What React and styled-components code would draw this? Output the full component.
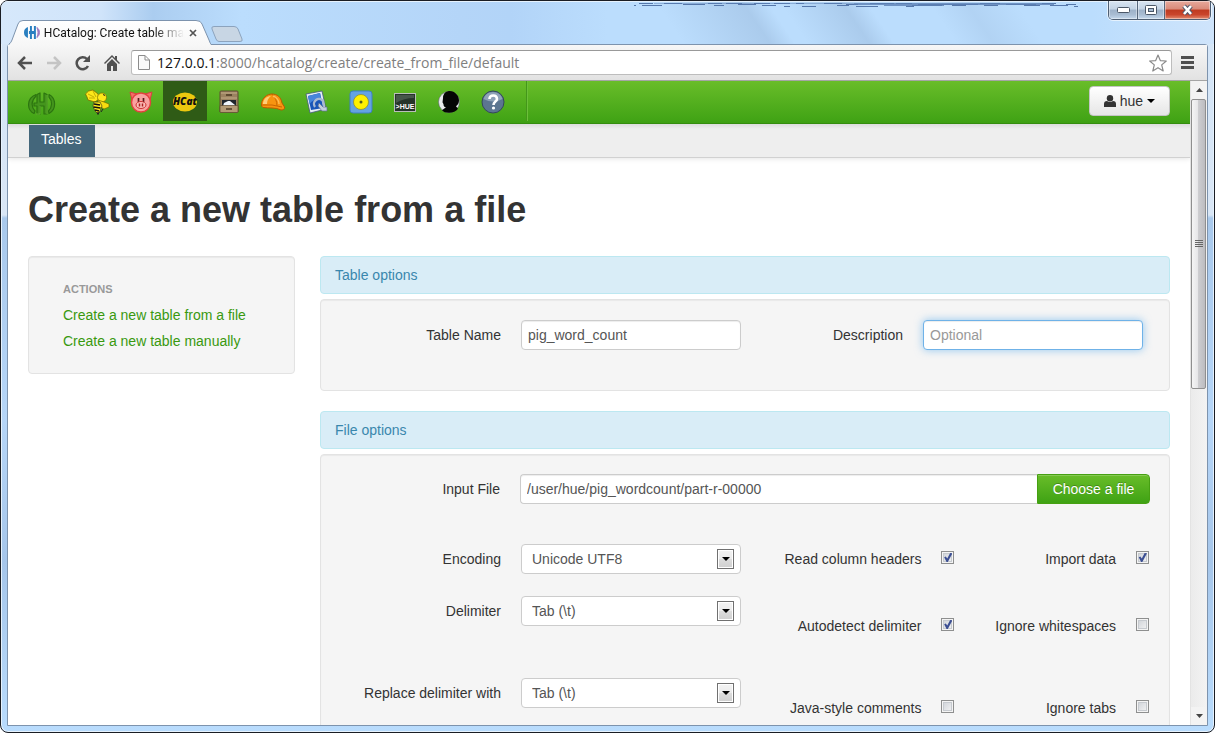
import React from "react";
import styled, { createGlobalStyle } from "styled-components";

const Global = createGlobalStyle`
  *, *::before, *::after { box-sizing: border-box; }
  html, body, #root { height: 100%; }
  body {
    margin: 0;
    background: #fff;
    overflow: hidden;
    font-family: "Liberation Sans", Arial, sans-serif;
    font-size: 14px;
    line-height: 20px;
    color: #333;
  }
  button, input, select { font: inherit; }
  svg { display: block; }
`;

/* ---------- window frame ---------- */

const Window = styled.div`
  height: 100vh;
  min-width: 960px;
  display: flex;
  flex-direction: column;
  position: relative;
  border: 1px solid #1a1d24;
  border-radius: 8px;
  padding: 0 6px 6px;
  overflow: hidden;
  box-shadow: inset 0 0 0 1px #e6f2fd;
  background: linear-gradient(180deg, #d3e5f8 0, #d9e6f5 214px, #a9c9ec 217px, #b6d6f8 420px, #a6c6ea 560px, #b9dcfd 100%);
`;

const TitleBar = styled.header`
  height: 43px;
  flex: none;
  display: flex;
  align-items: flex-end;
  margin: 0 -6px;
  padding-left: 8px;
  border-top: 1px solid #e6f2fd;
  background:
    linear-gradient(56deg, transparent 55%, rgba(140, 170, 205, 0.35) 62%, transparent 64% 65%, rgba(140, 170, 205, 0.35) 70%, transparent 72% 77%, rgba(140, 170, 205, 0.2) 80%, transparent 84%),
    linear-gradient(90deg, #d6e8fb 0, #d0e4fa 100px, #abcdf0 152px, #bbddfd 240px, #b4d5f8 38%, #b2d4f8 42%, #bbddfd 50%, #bbddfd 90%, #cfe4fb 100%);
`;

const Artifact = styled.svg`
  position: absolute;
  top: 0;
  right: 130px;
`;

const Controls = styled.div`
  position: absolute;
  top: 0;
  right: 3px;
  display: flex;
  height: 19px;
  border: 1px solid #4f5f73;
  border-top: 0;
  border-radius: 0 0 5px 5px;
  overflow: hidden;
  box-shadow: 0 0 0 1px rgba(255, 255, 255, 0.6);
`;

const ControlButton = styled.button`
  width: ${(p) => p.$width}px;
  padding: 0;
  border: 0;
  border-left: ${(p) => (p.$first ? "0" : "1px solid #56677c")};
  display: flex;
  align-items: center;
  justify-content: center;
  background: ${(p) =>
    p.$close
      ? "linear-gradient(#e7a99c 0, #d98a79 45%, #bf3a20 50%, #c9452b 75%, #e28a6e 100%)"
      : "linear-gradient(#d8e5f2 0, #c3d3e4 45%, #9db2c9 50%, #a8bcd2 75%, #c4d8ec 100%)"};
  box-shadow: inset 0 0 0 1px rgba(255, 255, 255, 0.4);
`;

const Tab = styled.div`
  position: relative;
  z-index: 1;
  width: 202px;
  height: 25px;
  margin-bottom: -1px;
  flex: none;
`;

const TabShape = styled.svg`
  position: absolute;
  inset: 0;
`;

const TabContent = styled.div`
  position: relative;
  display: flex;
  align-items: center;
  height: 25px;
  padding: 0 9px 0 15px;
`;

const TabTitle = styled.span`
  flex: 1;
  margin-left: 4px;
  white-space: nowrap;
  font: 12px/16px Roboto, "Open Sans", sans-serif;
  color: #111;
  mask-image: linear-gradient(90deg, #000 110px, transparent 140px);
`;

const BareButton = styled.button`
  display: flex;
  align-items: center;
  justify-content: center;
  width: ${(p) => p.$width}px;
  height: 24px;
  padding: 0;
  border: 0;
  background: none;
  flex: none;
`;

const NewTab = styled(BareButton)`
  height: 20px;
`;

const Inner = styled.div`
  flex: 1;
  min-height: 0;
  display: flex;
  flex-direction: column;
  border: 1px solid #7d93ad;
  border-radius: 3px 3px 0 0;
  background: #fff;
`;

const Toolbar = styled.div`
  height: 36px;
  flex: none;
  display: flex;
  align-items: center;
  padding: 0 4px 0 2px;
  border-bottom: 1px solid #a5a5a5;
  background: linear-gradient(#f7f7f7, #e2e2e2);
`;

const AddressBar = styled.div`
  flex: 1;
  display: flex;
  align-items: center;
  height: 25px;
  margin-left: 5px;
  padding: 0 4px 0 6px;
  border: 1px solid #bdbdbd;
  border-top-color: #999;
  border-radius: 3px;
  background: #fff;
`;

const Url = styled.div`
  flex: 1;
  margin-left: 7px;
  font: 14px/20px "Open Sans", "Noto Sans", sans-serif;
  color: #808080;
  white-space: nowrap;
`;

const Host = styled.span`
  color: #111;
`;

/* ---------- page ---------- */

const Viewport = styled.div`
  flex: 1;
  min-height: 0;
  display: flex;
`;

const Page = styled.div`
  flex: 1;
  min-width: 0;
  overflow: hidden;
  background: #fff;
`;

const NavBar = styled.nav`
  display: flex;
  height: 43px;
  padding: 0 20px;
  border-bottom: 1px solid #36910f;
  background: linear-gradient(#69bd29, #3fa214);
`;

const Logo = styled.a`
  width: 47px;
  padding-top: 11px;
`;

const NavItem = styled.a`
  display: flex;
  align-items: center;
  justify-content: center;
  width: 44px;
  height: 40px;
  padding-top: 2px;
  background: ${(p) => (p.$active ? "#2f5b16" : "transparent")};
`;

const NavDivider = styled.div`
  height: 40px;
  margin-left: 11px;
  border-left: 1px solid #44961a;
  border-right: 1px solid #6cc03a;
`;

const UserButton = styled.button`
  display: flex;
  align-items: center;
  gap: 4px;
  height: 30px;
  margin: 5px 0 0 auto;
  padding: 0 14px;
  border: 1px solid #c4c4c4;
  border-radius: 4px;
  background: linear-gradient(#fff, #e6e6e6);
  color: #333;
`;

const SubNav = styled.div`
  height: 34px;
  padding-left: 21px;
  border-bottom: 1px solid #d1d1d1;
  background: linear-gradient(#dcdcdc 0, #eee 5px);
  box-shadow: 0 1px 5px rgba(0, 0, 0, 0.1);
`;

const SubNavTab = styled.a`
  display: inline-block;
  height: 32px;
  margin-top: 1px;
  padding: 4px 14px 4px 12px;
  background: #44677b;
  color: #fff;
  text-decoration: none;
`;

const Body = styled.main`
  padding: 0 20px;
`;

const Heading = styled.h1`
  margin: 32px 0 26px;
  font-size: 36px;
  line-height: 40px;
  font-weight: bold;
`;

const Columns = styled.div`
  display: grid;
  grid-template-columns: 267fr 850fr;
  gap: 25px;
  align-items: start;
`;

const Well = styled.section`
  min-height: ${(p) => p.$min || 0}px;
  padding: ${(p) => p.$pad || "19px"};
  border: 1px solid #e3e3e3;
  border-radius: 4px;
  background: #f5f5f5;
  box-shadow: inset 0 1px 1px rgba(0, 0, 0, 0.05);
`;

const SideTitle = styled.h2`
  margin: 0 0 3px;
  font-size: 11px;
  line-height: 20px;
  color: #999;
  text-transform: uppercase;
`;

const SideLink = styled.a`
  display: block;
  padding: 3px 0;
  color: #39990f;
  text-decoration: none;
`;

const SectionTitle = styled.h2`
  margin: ${(p) => (p.$spaced ? "20px" : "0")} 0 5px;
  padding: 8px 14px;
  border: 1px solid #bce8f1;
  border-radius: 4px;
  background: #d9edf7;
  color: #3a87ad;
  font-size: 14px;
  font-weight: normal;
  line-height: 20px;
`;

const Pair = styled.div`
  display: grid;
  grid-template-columns: 402fr 408fr;
`;

const Field = styled.div`
  display: flex;
  align-items: center;
  height: 30px;
`;

const FieldLabel = styled.label`
  width: ${(p) => (p.$flush ? "160px" : "161px")};
  margin-right: 20px;
  flex: none;
  text-align: right;
`;

const TextInput = styled.input`
  width: ${(p) => (p.$grow ? "auto" : "220px")};
  flex: ${(p) => (p.$grow ? "1" : "none")};
  min-width: 0;
  height: 30px;
  padding: 4px 6px;
  border: 1px solid ${(p) => (p.$focus ? "#6fb2e8" : "#ccc")};
  border-right-width: ${(p) => (p.$grow ? "0" : "1px")};
  border-radius: ${(p) => (p.$grow ? "4px 0 0 4px" : "4px")};
  outline: 0;
  background: #fff;
  color: #555;
  box-shadow: inset 0 1px 1px rgba(0, 0, 0, 0.075)
    ${(p) => (p.$focus ? ", 0 0 8px rgba(82, 168, 236, 0.6)" : "")};
  &::placeholder { color: #999; }
`;

const ChooseButton = styled.button`
  height: 30px;
  min-width: 113px;
  padding: 0 14px;
  border: 1px solid #46a012;
  border-radius: 0 4px 4px 0;
  background: linear-gradient(#69bd29, #3fa214);
  color: #fff;
  text-shadow: 0 -1px 0 rgba(0, 0, 0, 0.25);
  box-shadow: inset 0 1px 0 rgba(255, 255, 255, 0.2);
`;

const Options = styled.div`
  display: grid;
  grid-template-columns: 400fr 214fr 195fr;
  grid-template-rows: 52px 82px 82px;
  margin-top: 40px;
  padding-right: 1px;
`;

const SelectBox = styled.div`
  position: relative;
  width: 220px;
  flex: none;
`;

const Select = styled.select`
  display: block;
  width: 100%;
  height: 30px;
  padding: 0 30px 0 10px;
  border: 1px solid #ccc;
  border-radius: 4px;
  appearance: none;
  background: #fff;
  color: #555;
`;

const SelectArrow = styled.span`
  position: absolute;
  top: 5px;
  right: 7px;
  display: flex;
  align-items: center;
  justify-content: center;
  width: 17px;
  height: 20px;
  border: 1px solid #707070;
  background: linear-gradient(#f3f3f3, #ebebeb 50%, #ddd 51%, #cfcfcf);
  box-shadow: inset 0 0 0 1px #fff;
  pointer-events: none;
`;

const CheckLabel = styled.label`
  display: flex;
  justify-content: flex-end;
  align-items: center;
  gap: 20px;
  height: 30px;
  margin-top: ${(p) => (p.$low ? "15px" : "0")};
`;

const CheckBox = styled.input`
  appearance: none;
  position: relative;
  width: 13px;
  height: 13px;
  margin: 0 0 3px;
  border: 1px solid #8e8f8f;
  background: linear-gradient(135deg, #cbcfd5, #f6f6f6);
  box-shadow: inset 0 0 0 1px #f4f4f4, inset 0 0 0 2px #c6cacf;
  &:checked::after {
    content: "";
    position: absolute;
    inset: 1px;
    background: #3c4f93;
    clip-path: polygon(8% 48%, 26% 40%, 42% 62%, 74% 0, 100% 4%, 48% 100%, 34% 100%);
  }
`;

/* ---------- scroll bar ---------- */

const ScrollBar = styled.div`
  width: 17px;
  flex: none;
  display: flex;
  flex-direction: column;
  align-items: flex-start;
  border-left: 1px solid #e3e3e3;
  background: linear-gradient(90deg, #ebebeb, #f3f3f3);
`;

const ScrollArrow = styled.button`
  display: flex;
  align-items: center;
  justify-content: center;
  width: 16px;
  height: 18px;
  padding: 0;
  border: 0;
  background: #f3f3f3;
`;

const Thumb = styled.div`
  flex: 0 0 45%;
  width: 15px;
  display: flex;
  align-items: center;
  justify-content: center;
  border: 1px solid #8f8f8f;
  border-radius: 2px;
  background: linear-gradient(90deg, #f5f5f5 0, #e6e6e8 45%, #cdcdd0 50%, #bcbcc0 100%);
`;

const Spacer = styled.div`
  flex: 1;
`;

/* ---------- drawings ---------- */

const Caret = ({ w = 8 }) => (
  <svg width={w} height={w / 2} viewBox="0 0 8 4"><path d="M0 0h8L4 4z" fill="#000" /></svg>
);

const Favicon = () => (
  <svg width="16" height="13" viewBox="0 0 16 13">
    <path d="M4 1v11C1 11 0 9 0 6.500S1 2 4 1z" fill="#2a7fc0" />
    <path d="M5 5h1V0h2v5h2V0h2v13h-2V8H8v5H6V8H5z" fill="#2a7fc0" />
    <path d="M13 1.500c3.500 2 3.500 8 0 10 1.500-3.500 1.500-6.500 0-10z" fill="#a07cc0" stroke="#a07cc0" />
  </svg>
);

const HueLogo = () => (
  <svg width="28" height="24" viewBox="0 0 28 24">
    <g fill="#44951d" stroke="#2c7410" strokeWidth="1.200" strokeLinejoin="round">
      <path d="M8 2.500C-1.500 6-1.500 18 6 21.500L7 19C3 15 3 9 8 4z" />
      <path d="M21 2.500c7.500 4 7.500 15 0 19l-.5-2.500c4-4 4-10 .500-14z" />
      <path d="M9 2.500 12 1v9h4V1l3 1.500V22h-3v-8h-4v8H9v-8H6v-3h3z" />
    </g>
    <path d="M12 14v8M8 22h4M19 3v19" stroke="#6fbf3a" strokeWidth=".8" fill="none" />
  </svg>
);

const Bee = () => (
  <svg width="26" height="26" viewBox="0 0 26 26">
    <path d="M1.500 5Q4 1 9 1l5 4 1 5-4 3-7-2-1-3z" fill="#ffe81a" stroke="#7a6a00" strokeWidth=".8" />
    <path d="m4 5 6 3M9 2l3 6M5 9l6 0" stroke="#b39e00" fill="none" strokeWidth=".8" />
    <circle cx="18" cy="8.500" r="4.500" fill="#ffe81a" stroke="#7a6a00" strokeWidth=".7" />
    <path d="m14 11 6 2 5 2v3l-5 2-6-4z" fill="#f6dc10" stroke="#6a5c00" strokeWidth=".6" />
    <path d="M10 13h6l2 4-2 5-2 3-3-3-2-5z" fill="#ffe81a" stroke="#222" strokeWidth=".6" />
    <path d="m10 15 6 1M9.500 18l7 1M11 21l4 1" stroke="#111" strokeWidth="1.700" />
    <path d="m13 23 1 2.500 1-2.500M19 5.500l2 1M19 20l-2 3" stroke="#222" fill="none" />
  </svg>
);

const Pig = () => (
  <svg width="24" height="24" viewBox="0 0 24 24">
    <path d="m1 2 7 2-5 6zM23 2l-7 2 5 6z" fill="#f56d6a" stroke="#d83f3f" />
    <circle cx="12" cy="12.500" r="9.500" fill="#f9a2a0" stroke="#e2423f" strokeWidth="1.500" />
    <path d="M9.500 8v4M14.500 8v4" stroke="#5a1a1a" strokeWidth="1.700" />
    <ellipse cx="12" cy="15" rx="5" ry="3.500" fill="#fcbcb8" stroke="#c33" />
    <path d="M10.500 13.500v3M13.500 13.500v3" stroke="#a22" strokeWidth="1.500" />
  </svg>
);

const HCat = () => (
  <svg width="28" height="22" viewBox="0 0 28 22">
    <ellipse cx="14" cy="11" rx="12" ry="9.500" fill="#ecc80f" />
    <text x="14" y="14" textAnchor="middle" fontFamily="Open Sans, sans-serif" fontSize="10" fontWeight="800" fontStyle="italic" fill="#111">HCat</text>
  </svg>
);

const Cabinet = () => (
  <svg width="22" height="24" viewBox="0 0 22 24">
    <path d="M2 2q0-1 1-1h16q1 0 1 1v20H2z" fill="#9b8260" stroke="#5f4c32" />
    <path d="M3 3h16M3 8h16" stroke="#c3ad87" />
    <rect x="4" y="10" width="14" height="6" fill="#20262c" />
    <path d="m5 16 1-3 4-2 2 0 5 4v1z" fill="#eef4fa" />
    <rect x="2" y="15.500" width="18" height="7" rx="1" fill="#b39a75" stroke="#5c482e" strokeWidth=".7" />
    <path d="M8 5h6M8 19h6" stroke="#4a3820" strokeWidth="1.500" />
  </svg>
);

const Helmet = () => (
  <svg width="26" height="20" viewBox="0 0 26 20">
    <path d="M1.500 12C2 6 7 2 12 2c5 0 9 3 10 9l2.500 4q.5 3-3.500 3-4-2-9-2-4 0-9-.500-2-1-1.500-3.500z" fill="#f79410" stroke="#b95a00" />
    <path d="M3 12c0-4 3-8 8-8-3 2-4 5-4 8z" fill="#ffcf78" />
    <path d="M12 2c3 3 5 7 5 12M2 13q10-1 20 2" stroke="#c96500" fill="none" />
    <path d="M13 4c3 1 6 4 6 8" stroke="#ffbd58" strokeWidth="1.500" fill="none" />
  </svg>
);

const Designer = () => (
  <svg width="24" height="24" viewBox="0 0 24 24">
    <path d="m1 4 16-3 4 18-16 4z" fill="#e6edf5" stroke="#43597a" strokeWidth=".8" />
    <path d="m3 6 12-3 3.500 15L6 20z" fill="#1955b8" />
    <path d="m3 6 12-3 1 5Q8 9 4.500 14z" fill="#4685dc" />
    <path d="M10 17a5 5 0 1 1 8-6l1 5" fill="none" stroke="#a9b9d2" strokeWidth="2.400" />
    <path d="m14 13 4 4h4v4h-5l-4-5z" fill="#c3cedd" stroke="#5e7397" strokeWidth=".7" />
  </svg>
);

const Disc = () => (
  <svg width="24" height="24" viewBox="0 0 24 24">
    <rect x="1" y="1" width="22" height="22" rx="3" fill="#64a3e2" stroke="#3f7fc4" />
    <circle cx="12" cy="12" r="7.500" fill="#fff100" stroke="#8b8a25" strokeWidth=".7" />
    <circle cx="12" cy="12" r="1.500" fill="#555d20" />
  </svg>
);

const Shell = () => (
  <svg width="22" height="19" viewBox="0 0 22 19">
    <rect x=".5" y=".5" width="21" height="18" fill="#26342a" stroke="#b9beb9" />
    <path d="M2 2h18v3Q10 5 2 10z" fill="#46564a" />
    <text x="11" y="16" textAnchor="middle" fontFamily="Liberation Sans, sans-serif" fontSize="7" fontWeight="bold" fill="#fff">&gt;HUE</text>
  </svg>
);

const Profile = () => (
  <svg width="24" height="24" viewBox="0 0 24 24">
    <circle cx="12" cy="12" r="10.500" fill="#e9ebec" stroke="#667" strokeWidth=".6" />
    <path d="M11 1.200c6-1.200 11 4 11 9 0 3-1 4-3 6l2 2.500q-3 4-9 4-5 0-7-2.500l4-3q-2.500 0-2.500-3l-1-2 .500-4q0-6 5-7z" fill="#050505" />
  </svg>
);

const Help = () => (
  <svg width="24" height="24" viewBox="0 0 24 24">
    <circle cx="12" cy="12" r="11" fill="#5c7590" stroke="#34485c" />
    <path d="M2.500 9a10 10 0 0 1 19 0q-9 5-19 0z" fill="#8ea2b7" />
    <path d="M8.500 9q0-3.500 3.700-3.500T16 9q0 1.500-1.800 2.700Q12.500 13 12.500 15" fill="none" stroke="#fff" strokeWidth="2.600" />
    <circle cx="12.500" cy="18" r="1.600" fill="#fff" />
  </svg>
);

const apps = [
  ["Beeswax", Bee], ["Pig", Pig], ["HCatalog", HCat], ["File Browser", Cabinet],
  ["Job Browser", Helmet], ["Job Designer", Designer], ["Oozie", Disc],
  ["Shell", Shell], ["User Admin", Profile], ["Help", Help],
];

const dashes = [
  [0, 4, 2], [5, 2, 14], [8, 4, 20], [30, 2, 18], [49, 3, 22], [74, 2, 14], [80, 4, 10], [92, 2, 16],
  [104, 3, 18], [120, 2, 16], [128, 4, 14], [140, 2, 16], [150, 5, 6], [162, 2, 8], [168, 5, 14],
  [190, 2, 18], [203, 4, 12], [212, 3, 12], [222, 5, 22], [236, 2, 24], [272, 5, 8], [262, 2, 16],
  [284, 3, 60], [278, 4, 30], [318, 4, 14], [346, 2, 20], [350, 4, 14], [372, 3, 30], [390, 4, 16],
  [408, 2, 14], [416, 4, 18], [432, 3, 10], [440, 5, 4],
];

function Choice({ name, label, value }) {
  return (
    <Field>
      <FieldLabel htmlFor={name}>{label}</FieldLabel>
      <SelectBox>
        <Select id={name} defaultValue={value}><option>{value}</option></Select>
        <SelectArrow><Caret /></SelectArrow>
      </SelectBox>
    </Field>
  );
}

function Check({ label, on, low }) {
  return (
    <CheckLabel $low={low}>
      {label}
      <CheckBox type="checkbox" defaultChecked={on} />
    </CheckLabel>
  );
}

function Chrome() {
  return (
    <>
      <TitleBar>
        <Tab>
          <TabShape width="202" height="25" viewBox="0 0 202 25">
            <defs>
              <linearGradient id="tabfill" x1="0" y1="0" x2="0" y2="1">
                <stop offset="0" stopColor="#fff" /><stop offset="1" stopColor="#f7f7f7" />
              </linearGradient>
            </defs>
            <path d="M0 25Q2 23 3 20L9 4Q10 .500 14 .500H187Q192 .500 193 4L200 20Q201 24 202 25z" fill="url(#tabfill)" />
            <path d="M0 24Q2 23 3 20L9 4Q10 .500 14 .500H187Q192 .500 193 4L200 20Q201 23 202 24" fill="none" stroke="#7d93ad" />
          </TabShape>
          <TabContent>
            <Favicon />
            <TabTitle>HCatalog: Create table ma</TabTitle>
            <BareButton $width={18} aria-label="Close tab">
              <svg width="8" height="8" viewBox="0 0 8 8"><path d="m1 1 6 6M7 1 1 7" stroke="#555" strokeWidth="1.700" /></svg>
            </BareButton>
          </TabContent>
        </Tab>
        <NewTab $width={32} aria-label="New tab">
          <svg width="32" height="16" viewBox="0 0 32 16">
            <path d="M3 .500H23Q26 .500 27 3L31 13Q32 15.500 29 15.500H8Q6 15.500 5 13L1 3Q0 .500 3 .500z" fill="#c8d6e4" stroke="#8ca3bd" />
          </svg>
        </NewTab>
      </TitleBar>
      <Artifact width="450" height="6" viewBox="0 0 450 6">
        {dashes.map(([x, y, w]) => <rect key={x} x={x} y={y} width={w} height="1" fill="#5577aa" />)}
        <rect x="20" y="2" width="200" height="1" fill="#5b80b4" opacity=".5" />
        <rect x="220" y="2" width="200" height="2" fill="#5b80b4" opacity=".8" />
        <rect x="250" y="4" width="60" height="1" fill="#5b80b4" opacity=".8" />
      </Artifact>
      <Controls>
        <ControlButton $width={28} $first aria-label="Minimize">
          <svg width="13" height="6" viewBox="0 0 13 6"><rect x=".5" y=".5" width="12" height="5" rx="1" fill="#fff" stroke="#4b5868" /></svg>
        </ControlButton>
        <ControlButton $width={27} aria-label="Maximize">
          <svg width="12" height="10" viewBox="0 0 12 10">
            <rect x=".5" y=".5" width="11" height="9" rx="1" fill="#fff" stroke="#4b5868" />
            <rect x="3.500" y="3.500" width="5" height="3" fill="#a9bdd3" stroke="#4b5868" />
          </svg>
        </ControlButton>
        <ControlButton $width={46} $close aria-label="Close">
          <svg width="13" height="12" viewBox="0 0 13 12">
            <path d="m3 2 7 8M10 2 3 10" stroke="#51576a" strokeWidth="4.500" />
            <path d="m3 2 7 8M10 2 3 10" stroke="#fff" strokeWidth="2.600" />
          </svg>
        </ControlButton>
      </Controls>
    </>
  );
}

function BrowserBar() {
  return (
    <Toolbar>
      <BareButton $width={29} aria-label="Back">
        <svg width="16" height="14" viewBox="0 0 16 14" fill="none" stroke="#505050" strokeWidth="2.500"><path d="M8 1 2 7l6 6M2 7h13" /></svg>
      </BareButton>
      <BareButton $width={29} aria-label="Forward">
        <svg width="16" height="14" viewBox="0 0 16 14" fill="none" stroke="#c4c4c4" strokeWidth="2.500"><path d="m8 1 6 6-6 6M14 7H1" /></svg>
      </BareButton>
      <BareButton $width={29} aria-label="Reload">
        <svg width="16" height="16" viewBox="0 0 16 16"><path d="M13 11a6 6 0 1 1-1-7" fill="none" stroke="#505050" strokeWidth="2.500" /><path d="M15 0v7H8z" fill="#505050" /></svg>
      </BareButton>
      <BareButton $width={29} aria-label="Home">
        <svg width="16" height="16" viewBox="0 0 16 16" fill="#505050"><path d="M8 0 0 8l1 1 7-7 7 7 1-1-3-3V1h-2v2zM3 9l5-5 5 5v7H9v-5H7v5H3z" /></svg>
      </BareButton>
      <AddressBar>
        <svg width="12" height="15" viewBox="0 0 12 15" fill="#fafafa" stroke="#8c8c8c"><path d="M.5.5H7L11.500 5v9.500H.5zM7 .5V5h4.500" /></svg>
        <Url><Host>127.0.0.1</Host>:8000/hcatalog/create/create_from_file/default</Url>
        <svg width="18" height="18" viewBox="0 0 18 18" fill="#fff" stroke="#8a8a8a" strokeWidth="1.200" strokeLinejoin="round">
          <path d="m9 1 2.300 5.600 6 .4-4.600 3.900L14.200 17 9 13.700 3.800 17l1.500-6.100L.7 7l6-.4z" />
        </svg>
      </AddressBar>
      <BareButton $width={31} aria-label="Menu">
        <svg width="13" height="13" viewBox="0 0 13 13"><path d="M0 1.500h13M0 6.500h13M0 11.500h13" stroke="#505050" strokeWidth="3" /></svg>
      </BareButton>
    </Toolbar>
  );
}

export default function App() {
  return (
    <>
      <Global />
      <Window>
        <Chrome />
        <Inner>
          <BrowserBar />
          <Viewport>
            <Page>
              <NavBar>
                <Logo href="#" aria-label="Hue"><HueLogo /></Logo>
                {apps.map(([name, Icon]) => (
                  <NavItem key={name} href="#" aria-label={name} $active={name === "HCatalog"}><Icon /></NavItem>
                ))}
                <NavDivider />
                <UserButton>
                  <svg width="12" height="12" viewBox="0 0 12 12" fill="#333"><circle cx="6" cy="3.200" r="3.200" /><path d="M0 12V9q0-3 3-3 3 2 6 0 3 0 3 3v3z" /></svg>
                  hue
                  <Caret />
                </UserButton>
              </NavBar>
              <SubNav><SubNavTab href="#">Tables</SubNavTab></SubNav>
              <Body>
                <Heading>Create a new table from a file</Heading>
                <Columns>
                  <Well as="aside" $min={118} $pad="22px 34px 17px">
                    <SideTitle>Actions</SideTitle>
                    <SideLink href="#">Create a new table from a file</SideLink>
                    <SideLink href="#">Create a new table manually</SideLink>
                  </Well>
                  <div>
                    <SectionTitle>Table options</SectionTitle>
                    <Well $min={92} $pad="20px 19px">
                      <Pair>
                        <Field>
                          <FieldLabel htmlFor="name">Table Name</FieldLabel>
                          <TextInput id="name" defaultValue="pig_word_count" />
                        </Field>
                        <Field>
                          <FieldLabel htmlFor="description">Description</FieldLabel>
                          <TextInput id="description" placeholder="Optional" $focus />
                        </Field>
                      </Pair>
                    </Well>
                    <SectionTitle $spaced>File options</SectionTitle>
                    <Well>
                      <Field>
                        <FieldLabel htmlFor="path" $flush>Input File</FieldLabel>
                        <TextInput id="path" defaultValue="/user/hue/pig_wordcount/part-r-00000" $grow />
                        <ChooseButton>Choose a file</ChooseButton>
                      </Field>
                      <Options>
                        <Choice name="encoding" label="Encoding" value="Unicode UTF8" />
                        <Check label="Read column headers" on />
                        <Check label="Import data" on />
                        <Choice name="delimiter" label="Delimiter" value="Tab (\t)" />
                        <Check label="Autodetect delimiter" on low />
                        <Check label="Ignore whitespaces" low />
                        <Choice name="replace" label="Replace delimiter with" value="Tab (\t)" />
                        <Check label="Java-style comments" low />
                        <Check label="Ignore tabs" low />
                      </Options>
                    </Well>
                  </div>
                </Columns>
              </Body>
            </Page>
            <ScrollBar>
              <ScrollArrow aria-label="Scroll up">
                <svg width="7" height="4" viewBox="0 0 7 4"><path d="M0 4h7L3.500 0z" fill="#444" /></svg>
              </ScrollArrow>
              <Thumb>
                <svg width="8" height="8" viewBox="0 0 8 8"><path d="M0 .5h8M0 2.500h8M0 4.500h8M0 6.500h8" stroke="#666" /></svg>
              </Thumb>
              <Spacer />
              <ScrollArrow aria-label="Scroll down">
                <svg width="7" height="4" viewBox="0 0 7 4"><path d="M0 0h7L3.500 4z" fill="#444" /></svg>
              </ScrollArrow>
            </ScrollBar>
          </Viewport>
        </Inner>
      </Window>
    </>
  );
}
